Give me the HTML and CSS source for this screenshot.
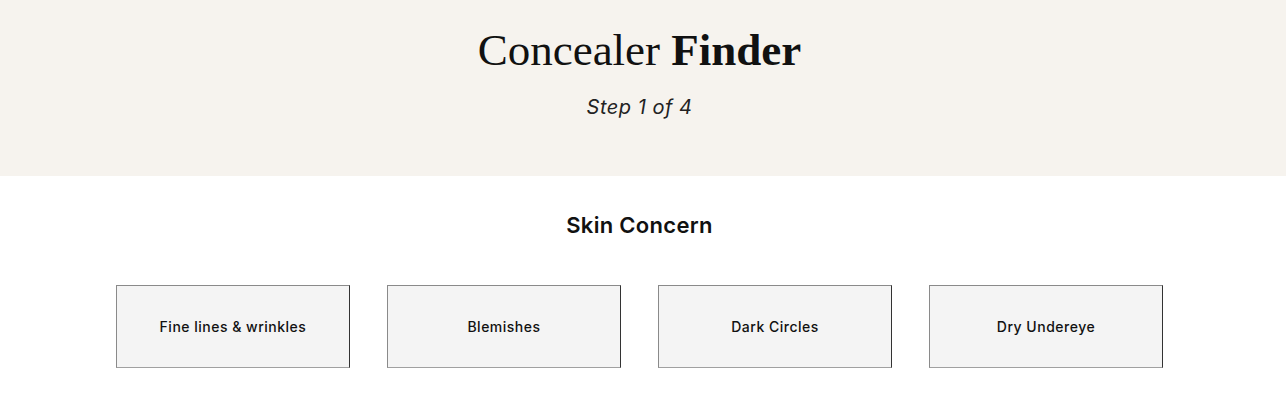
FILE: index.html
```html
<!DOCTYPE html>
<html lang="en">
<head>
<meta charset="utf-8">
<title>Concealer Finder</title>
<link rel="stylesheet" href="styles.css">
</head>
<body>
<header class="hero">
  <h1 class="title">Concealer <strong>Finder</strong></h1>
  <p class="step">Step 1 of 4</p>
</header>
<main class="quiz">
  <h2 class="question">Skin Concern</h2>
  <div class="options">
    <button class="option">Fine lines &amp; wrinkles</button>
    <button class="option">Blemishes</button>
    <button class="option">Dark Circles</button>
    <button class="option">Dry Undereye</button>
  </div>
</main>
</body>
</html>
```
FILE: styles.css
```css
* { box-sizing: border-box; }
html, body { margin: 0; padding: 0; background: #fff; }
body { font-family: "Inter", "Noto Sans", sans-serif; color: #111; }

.hero {
  background: #f6f3ee;
  height: 176px;
  padding: 25px 7px 0 0;
  text-align: center;
}
.title {
  margin: 0;
  font-family: "Liberation Serif", "DejaVu Serif", serif;
  font-weight: 400;
  font-size: 45px;
  line-height: 50px;
  color: #111;
}
.title strong { font-weight: 700; }
.step {
  margin: 20px 0 0;
  font-style: italic;
  font-size: 20px;
  line-height: 24px;
  letter-spacing: 0.5px;
  color: #222;
}

.quiz {
  padding: 35px 7px 0 0;
  text-align: center;
}
.question {
  margin: 0;
  font-size: 22px;
  font-weight: 600;
  line-height: 28px;
  letter-spacing: 0.3px;
  color: #111;
}
.options {
  display: flex;
  justify-content: center;
  gap: 37px;
  margin-top: 46px;
}
.option {
  width: 234px;
  height: 83px;
  background: #f4f4f4;
  border: 1px solid #8a8a8a;
  border-right-color: #333;
  border-bottom-color: #a0a0a0;
  font-family: "Inter", "Noto Sans", sans-serif;
  font-size: 14px;
  font-weight: 500;
  letter-spacing: 0.5px;
  color: #111;
  padding: 0;
}
```
